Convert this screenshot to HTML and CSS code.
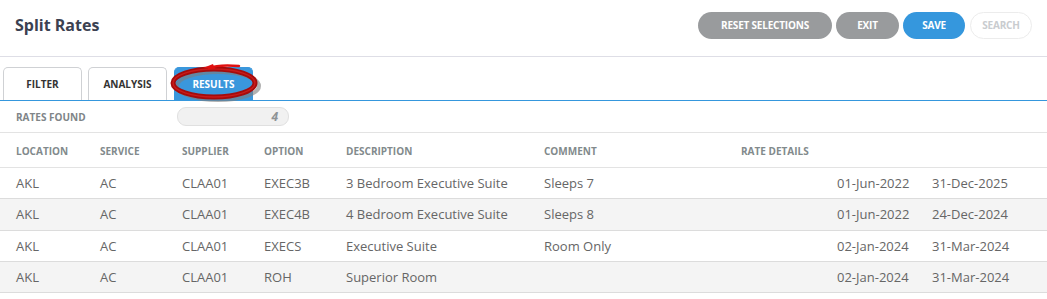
FILE: index.html
```html
<!DOCTYPE html>
<html lang="en">
<head>
    <meta charset="UTF-8">
    <title>Split Rates</title>
    <link rel="stylesheet" href="styles.css">
</head>
<body>
    <header class="page-header">
        <h1>Split Rates</h1>
        <div class="actions">
            <button class="btn grey wide">RESET SELECTIONS</button>
            <button class="btn grey">EXIT</button>
            <button class="btn blue">SAVE</button>
            <button class="btn ghost">SEARCH</button>
        </div>
    </header>

    <div class="tabs">
        <div class="tab">FILTER</div>
        <div class="tab">ANALYSIS</div>
        <div class="tab active">
            RESULTS
            <!-- annotation circle -->
            <svg class="mark" width="120" height="50" viewBox="0 0 120 50">
                <ellipse cx="60" cy="29" rx="41" ry="14" fill="none" stroke="#7d7d7d" stroke-width="4" opacity="0.6"/>
                <ellipse cx="56" cy="26" rx="41" ry="14" fill="none" stroke="#a50b0b" stroke-width="5"/>
                <ellipse cx="56" cy="26" rx="41" ry="14" fill="none" stroke="#c81a1a" stroke-width="1.5"/>
                <path d="M51 11 C 59 8, 69 8, 81 9" fill="none" stroke="#e01010" stroke-width="2.5" stroke-linecap="round"/>
                <path d="M55 7 L 45 11 L 57 12 Z" fill="#e01010"/>
            </svg>
        </div>
    </div>

    <div class="found">
        <span class="label">RATES FOUND</span>
        <div class="count">4</div>
    </div>

    <table class="rates">
        <thead>
            <tr>
                <th class="c1">LOCATION</th>
                <th class="c2">SERVICE</th>
                <th class="c3">SUPPLIER</th>
                <th class="c4">OPTION</th>
                <th class="c5">DESCRIPTION</th>
                <th class="c6">COMMENT</th>
                <th class="c7">RATE DETAILS</th>
                <th class="c8"></th>
                <th></th>
            </tr>
        </thead>
        <tbody>
            <tr>
                <td>AKL</td><td>AC</td><td>CLAA01</td><td>EXEC3B</td>
                <td>3 Bedroom Executive Suite</td><td>Sleeps 7</td><td></td>
                <td>01-Jun-2022</td><td>31-Dec-2025</td>
            </tr>
            <tr>
                <td>AKL</td><td>AC</td><td>CLAA01</td><td>EXEC4B</td>
                <td>4 Bedroom Executive Suite</td><td>Sleeps 8</td><td></td>
                <td>01-Jun-2022</td><td>24-Dec-2024</td>
            </tr>
            <tr>
                <td>AKL</td><td>AC</td><td>CLAA01</td><td>EXECS</td>
                <td>Executive Suite</td><td>Room Only</td><td></td>
                <td>02-Jan-2024</td><td>31-Mar-2024</td>
            </tr>
            <tr>
                <td>AKL</td><td>AC</td><td>CLAA01</td><td>ROH</td>
                <td>Superior Room</td><td></td><td></td>
                <td>02-Jan-2024</td><td>31-Mar-2024</td>
            </tr>
        </tbody>
    </table>
</body>
</html>
```

FILE: styles.css
```css
body {
    font-family: "Open Sans", Arial, sans-serif;
    background-color: #fff;
    color: #666;
    margin: 0;
    padding: 0;
}

.page-header {
    display: flex;
    align-items: center;
    height: 50px;
    padding: 0 15px 6px 15px;
    border-bottom: 1px solid #dedee6;
}

.page-header h1 {
    font-size: 16px;
    font-weight: 700;
    color: #3b4151;
    margin: 0;
}

.actions {
    display: flex;
    gap: 4px;
    margin-left: auto;
}

.btn {
    font-family: "Open Sans", Arial, sans-serif;
    font-size: 10px;
    font-weight: 700;
    height: 27px;
    width: 63px;
    border-radius: 14px;
    border: 1px solid transparent;
    color: #fff;
    padding: 0;
    letter-spacing: -0.2px;
}

.btn.wide {
    width: 134px;
}

.btn.grey {
    background-color: #999b9d;
}

.btn.blue {
    width: 62px;
    background-color: #3597dd;
}

.btn.ghost {
    width: 62px;
    background-color: #fff;
    border-color: #ececec;
    color: #c9cccf;
    margin-left: 1px;
}

.tabs {
    display: flex;
    gap: 6px;
    padding: 10px 0 0 3px;
    border-bottom: 1px solid #3597dd;
}

.tab {
    position: relative;
    width: 77px;
    height: 32px;
    line-height: 33px;
    border: 1px solid #cfd1d4;
    border-bottom: none;
    border-radius: 5px 5px 0 0;
    font-size: 10px;
    font-weight: 700;
    color: #333;
    text-align: center;
}

.tab.active {
    background-color: #3a97dc;
    border-color: #3a97dc;
    color: #fff;
    margin-left: 1px;
}

.mark {
    position: absolute;
    left: -17px;
    top: -11px;
}

.found {
    display: flex;
    align-items: center;
    height: 31px;
    padding-left: 16px;
    border-bottom: 1px solid #e3e3e3;
}

.found .label {
    width: 161px;
    font-size: 10px;
    font-weight: 700;
    color: #7f8588;
}

.found .count {
    width: 100px;
    height: 17px;
    line-height: 17px;
    padding-right: 10px;
    border: 1px solid #e0e0e0;
    border-radius: 9px;
    background-color: #f1f1f1;
    text-align: right;
    font-size: 12px;
    font-style: italic;
    font-weight: 700;
    color: #8e9396;
}

.rates {
    width: 100%;
    border-collapse: collapse;
}

.rates th {
    height: 32px;
    padding: 2px 0 0 16px;
    font-size: 10px;
    font-weight: 700;
    color: #828a8c;
    text-align: left;
    border-bottom: 1px solid #e3e3e3;
}

.rates td {
    height: 30.3px;
    padding: 0 0 0 16px;
    font-size: 13px;
    color: #666;
    border-bottom: 1px solid #dcdcdc;
}

.rates tbody tr:nth-child(even) {
    background-color: #f4f4f4;
}

.rates .c1 { width: 68px; }
.rates .c2 { width: 66px; }
.rates .c3 { width: 66px; }
.rates .c4 { width: 66px; }
.rates .c5 { width: 182px; }
.rates .c6 { width: 181px; }
.rates .c7 { width: 80px; }
.rates .c8 { width: 79px; }
```
